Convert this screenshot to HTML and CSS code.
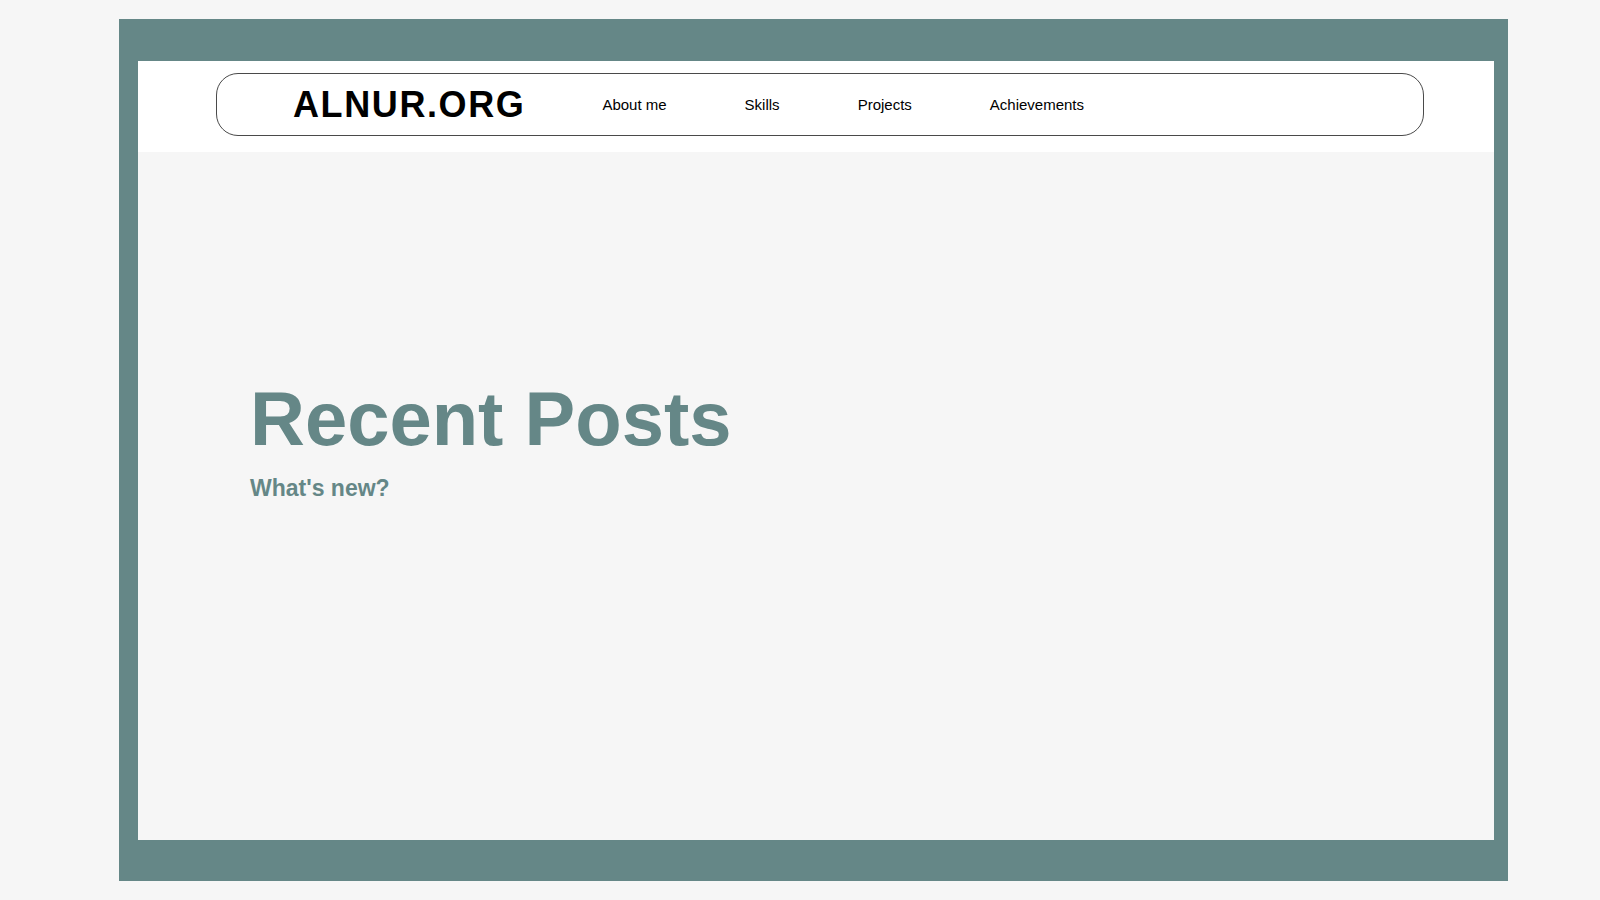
FILE: index.html
```html
<!DOCTYPE html>
<html lang="en">
<head>
<meta charset="utf-8">
<title>ALNUR.ORG</title>
<link rel="stylesheet" href="styles.css">
</head>
<body>
<div class="frame">
  <header class="site-header">
    <nav class="nav">
      <a class="logo" href="#">ALNUR.ORG</a>
      <a class="nav-link" href="#">About me</a>
      <a class="nav-link" href="#">Skills</a>
      <a class="nav-link" href="#">Projects</a>
      <a class="nav-link" href="#">Achievements</a>
    </nav>
  </header>
  <main class="content">
    <h1 class="title">Recent Posts</h1>
    <h2 class="subtitle">What's new?</h2>
  </main>
</div>
</body>
</html>
```

FILE: styles.css
```css
* { box-sizing: border-box; }
html, body { margin: 0; }
body {
  background: #f6f6f6;
  padding: 19px 0 0 119px;
  font-family: "Liberation Sans", Arial, Helvetica, sans-serif;
  height: 900px;
  overflow: hidden;
}
.frame {
  width: 1389px;
  height: 862px;
  border-style: solid;
  border-color: #658787;
  border-width: 42px 14px 41px 19px;
  display: flex;
  flex-direction: column;
  background: #f6f6f6;
}
.site-header {
  background: #ffffff;
  padding: 12px 70px 16px 78px;
}
.nav {
  height: 63px;
  border: 1px solid #4a4a4a;
  border-radius: 22px;
  display: flex;
  align-items: center;
  padding-left: 76px;
  background: #ffffff;
}
.nav a { color: #000; text-decoration: none; }
.logo {
  font-size: 36px;
  font-weight: 700;
  letter-spacing: 1.6px;
  line-height: 1;
  margin-right: 77px;
}
.nav-link {
  font-size: 15px;
  line-height: 1;
  margin-right: 78px;
}
.content {
  flex: 1;
  background: #f6f6f6;
  padding: 229px 0 0 112px;
}
.title {
  margin: 0;
  font-size: 76px;
  line-height: 1;
  font-weight: 700;
  color: #658787;
}
.subtitle {
  margin: 20px 0 0;
  font-size: 23px;
  line-height: 1;
  font-weight: 700;
  color: #658787;
}
```
